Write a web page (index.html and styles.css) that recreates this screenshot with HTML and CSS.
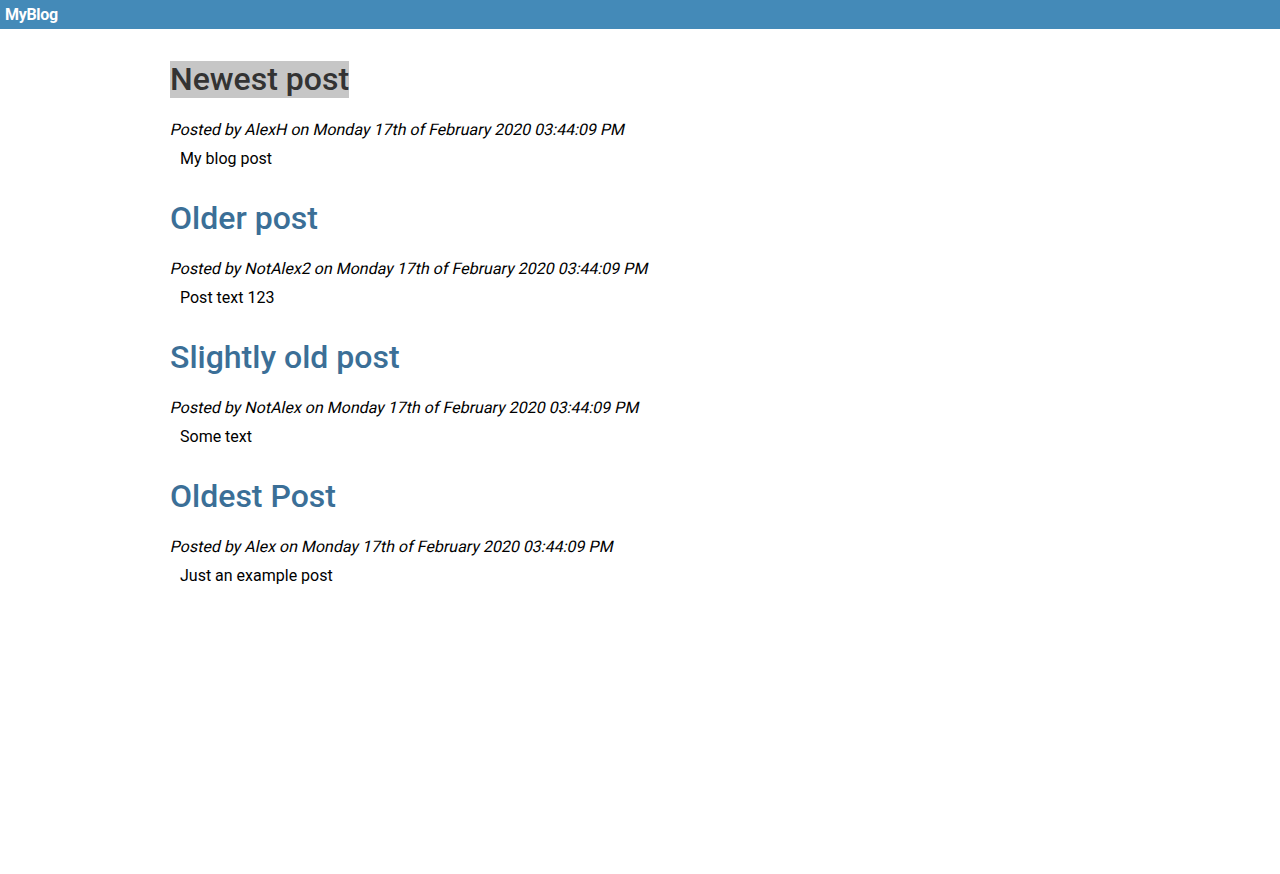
FILE: index.html
```html
<!DOCTYPE html>
<html>
<head>
<meta charset="utf-8">
<link rel="stylesheet" href="styles.css">
</head>
<body>
<header class="topbar"><span class="brand">MyBlog</span></header>
<main class="posts">
  <article class="post">
    <h1 class="post-title active">Newest post</h1>
    <p class="meta"><span class="slant">Posted by AlexH on Monday 17th of February 2020 03:44:09 PM</span></p>
    <p class="body">My blog post</p>
  </article>
  <article class="post">
    <h1 class="post-title">Older post</h1>
    <p class="meta"><span class="slant">Posted by NotAlex2 on Monday 17th of February 2020 03:44:09 PM</span></p>
    <p class="body">Post text 123</p>
  </article>
  <article class="post">
    <h1 class="post-title">Slightly old post</h1>
    <p class="meta"><span class="slant">Posted by NotAlex on Monday 17th of February 2020 03:44:09 PM</span></p>
    <p class="body">Some text</p>
  </article>
  <article class="post">
    <h1 class="post-title">Oldest Post</h1>
    <p class="meta"><span class="slant">Posted by Alex on Monday 17th of February 2020 03:44:09 PM</span></p>
    <p class="body">Just an example post</p>
  </article>
</main>
</body>
</html>
```
FILE: styles.css
```css
html, body { margin: 0; padding: 0; background: #fff; }
body { font-family: Roboto, "Liberation Sans", sans-serif; color: #000; }
.topbar { height: 29px; background: #448ab8; display: flex; align-items: center; padding-left: 5px; }
.brand { color: #fff; font-weight: 700; font-size: 16px; letter-spacing: -0.3px; }
.posts { padding: 32px 0 0 170px; display: flex; flex-direction: column; gap: 32px; }
.post { display: flex; flex-direction: column; align-items: flex-start; }
.post-title { margin: 0; font-size: 32px; font-weight: 500; line-height: 37px; color: #3b6f97; }
.post-title.active { background: #c6c6c6; color: #333; }
.meta { margin: 22px 0 0 0; font-size: 16px; line-height: 19px; }
.slant { display: inline-block; transform: skewX(-12deg); transform-origin: 0 75%; }
.body { margin: 10px 0 0 10px; font-size: 16px; line-height: 19px; }
```
